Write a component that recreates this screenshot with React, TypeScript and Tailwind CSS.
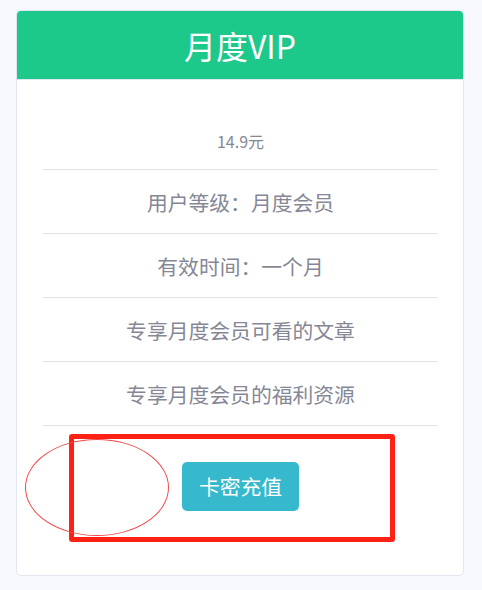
const rows = ['用户等级：月度会员', '有效时间：一个月', '专享月度会员可看的文章', '专享月度会员的福利资源']

export default function App() {
  return (
    <div
      className="relative min-h-[590px] bg-[#f8f9fc] pl-4 pt-[10px] pb-[14px]"
      style={{ fontFamily: '"Noto Sans CJK SC", "Noto Sans", sans-serif' }}
    >
      <div className="w-[448px] overflow-hidden rounded-[5px] border border-[#e3e6f0] bg-white">
        <div className="flex h-[69px] items-center justify-center border-b border-[#e3e6f0] bg-[#1cc88a] text-[32px] leading-none text-white">
          月度VIP
        </div>

        <div className="pl-[26px] pr-[25px] pt-[34px] pb-[64px]">
          <ul className="text-center text-[#858796]">
            <li className="border-b border-[#e3e3e3] pt-[17px] pb-[17px] text-[16px] leading-[21px]">14.9元</li>
            {rows.map((r) => (
              <li key={r} className="border-b border-[#e3e3e3] pt-[17px] pb-[16px] text-[20.8px] leading-[30px]">
                {r}
              </li>
            ))}
          </ul>

          <div className="mt-[36px] flex justify-center">
            <button className="flex h-[49px] w-[117px] items-center justify-center rounded-[5px] bg-[#36b9cc] text-[20.8px] text-white">
              卡密充值
            </button>
          </div>
        </div>
      </div>

      {/* annotation marks drawn over the card */}
      <div className="pointer-events-none absolute left-[69px] top-[434px] h-[108px] w-[326px] rounded-[3px] border-[5px] border-[#ff2116]" />
      <div className="pointer-events-none absolute left-[25px] top-[439px] h-[97px] w-[144px] rounded-[50%] border border-[#f04a4a]" />
    </div>
  )
}
